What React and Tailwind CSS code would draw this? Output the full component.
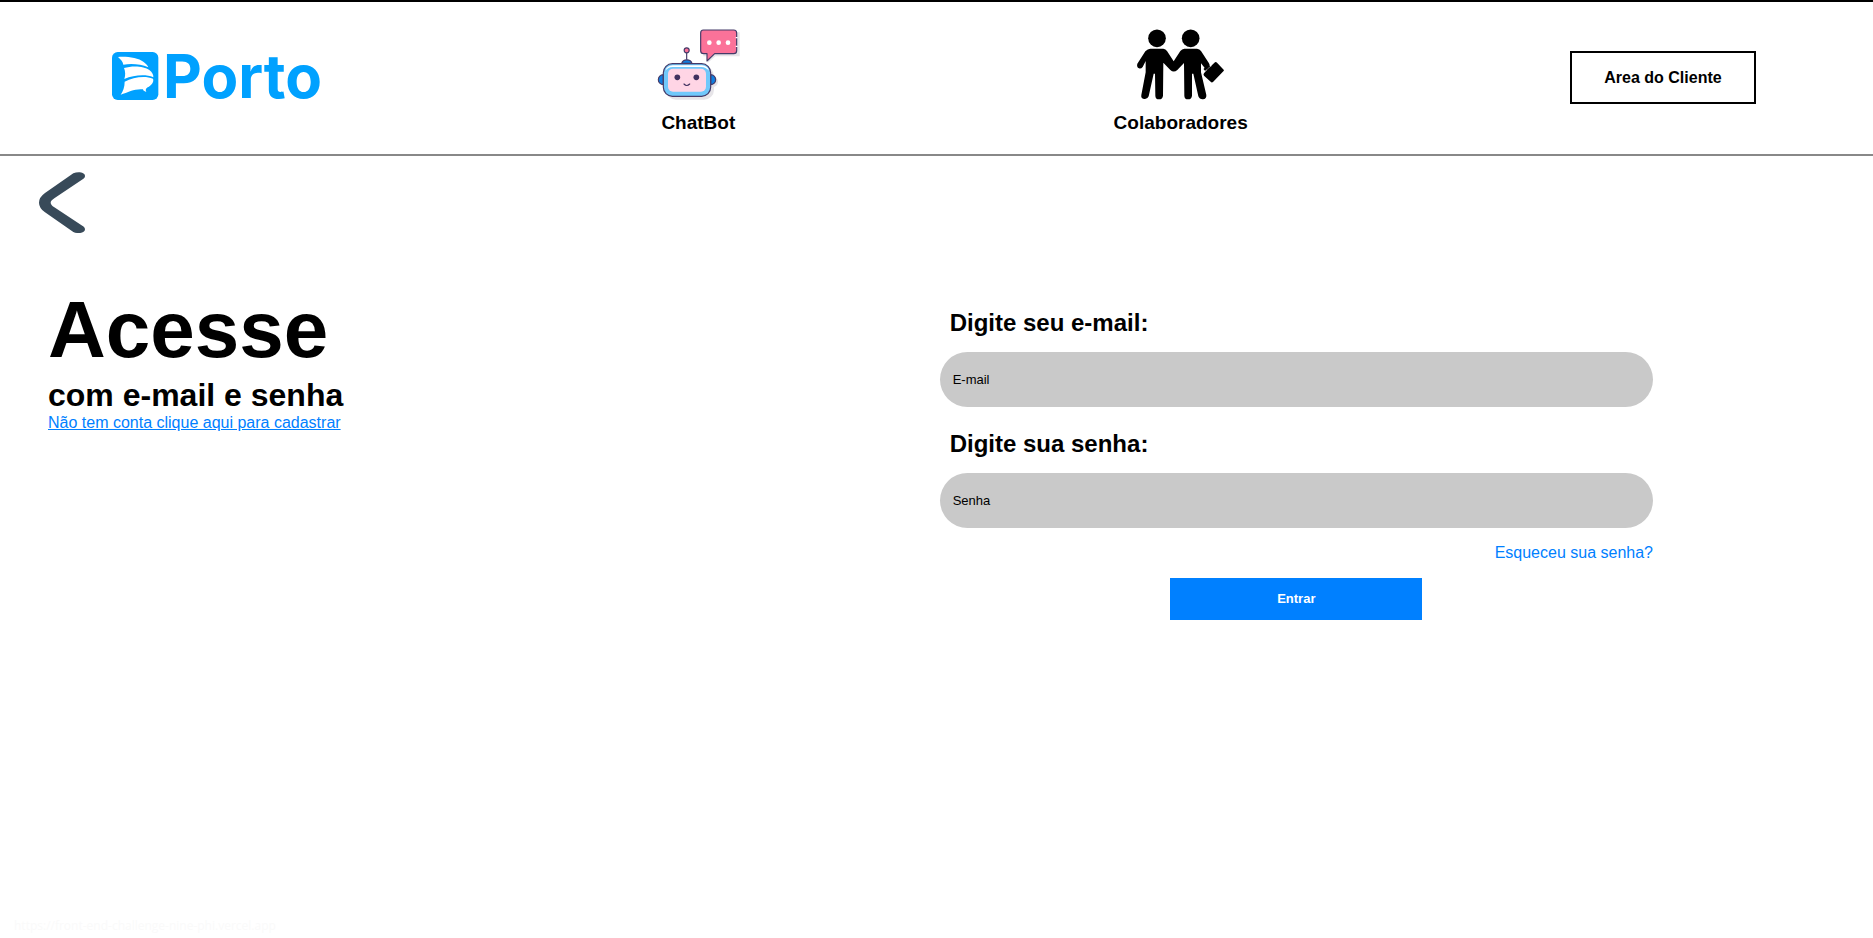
function SailMark() {
  return (
    <svg viewBox="65 66 141 144" className="h-12 w-[47px] shrink-0" aria-hidden="true">
      <rect x="65" y="66" width="139" height="144" rx="17" fill="#00a1ff" />
      <g fill="#fff">
        <path d="M83 81C110 79 143 83 160 96C168 102 172 107 174 112C151 102 123 100 99 104C98 96 92 89 83 81Z" />
        <path d="M101 114C126 106 162 108 177 120C186 127 190 135 189 142C166 132 131 135 102 147C106 135 105 124 101 114Z" />
        <path d="M103 155C128 142 163 136 188 146C192 156 182 167 172 172C166 176 165 180 168 186C161 184 158 181 158 178C136 175 114 186 91 194C98 184 103 170 103 155Z" />
      </g>
    </svg>
  );
}

function RobotIcon() {
  return (
    <svg viewBox="48 28 252 216" className="h-[72px] w-[84px]" aria-hidden="true">
      <g fill="#e6e4e8">
        <rect x="78" y="139" width="144" height="101" rx="30" />
        <path d="M190 38H299V110H226L203 130V110H190Z" />
        <path d="M218 170a16 16 0 0 1 0 32z" />
      </g>
      <g stroke="#453a68" strokeWidth="3.5" strokeLinejoin="round">
        <path d="M190 31H281Q290 31 290 40V93Q290 102 281 102H224L201 124V102H191Q182 102 182 93V40Q182 31 190 31Z" fill="#fb7299" />
        <path d="M140 98V120" fill="none" />
        <circle cx="140" cy="92" r="7.5" fill="#fb7299" />
        <path d="M125 131a16 14 0 0 1 31 0z" fill="#0f7ee0" />
        <path d="M70 165a15 15 0 0 0 0 30z" fill="#0f7ee0" />
        <path d="M212 165a15 15 0 0 1 0 30z" fill="#0f7ee0" />
        <rect x="70" y="132" width="142" height="98" rx="27" fill="#70c8fb" />
      </g>
      <path d="M76 153Q81 138 98 137H186Q202 138 207 153Q198 143 184 142H98Q84 143 76 153Z" fill="#fff" />
      <rect x="84" y="147" width="114" height="69" rx="15" fill="#ffd5e5" />
      <circle cx="112" cy="173" r="8.5" fill="#40315f" />
      <circle cx="169" cy="173" r="8.5" fill="#40315f" />
      <path d="M132 193q8 9 17 0" fill="none" stroke="#40315f" strokeWidth="3.5" strokeLinecap="round" />
      <g fill="#fff">
        <circle cx="208" cy="69" r="7" />
        <circle cx="236" cy="69" r="7" />
        <circle cx="264" cy="69" r="7" />
        <path d="M287 52h6v4h-6zM287 78h6v4h-6z" />
      </g>
    </svg>
  );
}

function PeopleIcon() {
  return (
    <svg viewBox="108 28 270 216" className="h-[72px] w-[90px]" aria-hidden="true">
      <circle cx="171" cy="56" r="26.5" />
      <circle cx="272" cy="56" r="26.5" />
      <path d="M151 87H190Q197 88 201 94L221 125L241 94Q246 88 253 87H291Q299 88 303 94L326 129Q331 134 327 139L316 147L303 131V158L319 226Q320 238 309 239Q299 240 295 230L280 162H276L276 228Q275 239 264 239Q253 239 253 228L252 130L232 151Q221 160 211 151L190 129L189 228Q188 239 177 239Q166 239 166 228L165 162H161L146 230Q142 240 132 238Q122 236 124 226L137 158V124L128 142Q123 148 117 146Q109 142 112 132L136 95Q143 87 151 87Z" />
      <path d="M320 151L345 128Q348 126 351 129L371 150Q373 153 370 155L339 187Q335 190 332 186L312 168Q309 165 312 161Z" />
      <path d="M313 151L328 137" stroke="#000" strokeWidth="8" fill="none" />
      <path d="M316 154l4 -3M331 141l4 -3" stroke="#fff" strokeWidth="2" />
    </svg>
  );
}

function NavItem({ icon, label }) {
  return (
    <a href="#" className="flex w-52 flex-col items-center gap-2.5">
      {icon}
      <span className="text-[19px] leading-6 font-bold">{label}</span>
    </a>
  );
}

function Field({ id, type, label, placeholder }) {
  return (
    <div className="flex flex-col gap-[15px]">
      <label htmlFor={id} className="pl-2.5 text-2xl leading-7 font-bold">
        {label}
      </label>
      <input
        id={id}
        type={type}
        placeholder={placeholder}
        className="h-[55px] w-full rounded-full bg-[#c9c9c9] px-[13px] text-[13px] placeholder:text-black"
      />
    </div>
  );
}

export default function App() {
  return (
    <div className="relative min-h-screen bg-white font-['Liberation_Sans',Arial,sans-serif] text-black">
      <header className="flex items-start justify-between border-t-2 border-b-2 border-t-black border-b-[#888888] pt-[27px] pr-[106px] pb-[19px] pl-28">
        <a href="#" className="mt-[22px] flex h-[50px] w-52 items-center gap-1">
          <SailMark />
          <span className="font-['Inter',sans-serif] text-[60px] leading-[50px] font-bold text-[#00a1ff]">Porto</span>
        </a>
        <NavItem icon={<RobotIcon />} label="ChatBot" />
        <NavItem icon={<PeopleIcon />} label="Colaboradores" />
        <div className="mt-[22px] flex w-52 justify-center">
          <button type="button" className="h-[53px] w-[186px] border-2 border-black text-base font-bold">
            Area do Cliente
          </button>
        </div>
      </header>

      <a href="#" aria-label="Voltar" className="mt-4 ml-[39px] block w-[46px]">
        <svg viewBox="0 0 138 183" className="h-[61px] w-[46px]" aria-hidden="true">
          <path
            d="M103 4C116 -2 138 0 138 12C138 17 134 20 131 22L46 79Q35 86 35 92Q35 98 46 106L131 162C134 164 138 167 138 172C138 184 116 186 103 180L18 121Q0 108 0 92Q0 76 18 63Z"
            fill="#384a59"
          />
        </svg>
      </a>

      <main className="mt-[57px] grid grid-cols-[5fr_4fr] pr-[220px] pl-12">
        <section>
          <h1 className="text-[80px] leading-[80px] font-bold">Acesse</h1>
          <h2 className="mt-[7px] text-[32px] leading-9 font-bold">com e-mail e senha</h2>
          <a href="#" className="block text-base leading-5 text-[#0080ff] underline">
            Não tem conta clique aqui para cadastrar
          </a>
        </section>

        <form className="flex flex-col pt-[19px]">
          <div className="flex flex-col gap-[23px]">
            <Field id="email" type="email" label="Digite seu e-mail:" placeholder="E-mail" />
            <Field id="senha" type="password" label="Digite sua senha:" placeholder="Senha" />
          </div>
          <a href="#" className="mt-[15px] self-end text-base leading-5 text-[#0080ff]">
            Esqueceu sua senha?
          </a>
          <button type="submit" className="mt-[15px] h-[42px] w-[252px] self-center bg-[#0080ff] text-[13px] font-bold text-white">
            Entrar
          </button>
        </form>
      </main>

      <p className="absolute bottom-0.5 left-3.5 font-['Open_Sans',sans-serif] text-xs leading-5 text-[#fafafa]">
        https://front-end-challenge-nine-phi.vercel.app
      </p>
    </div>
  );
}
